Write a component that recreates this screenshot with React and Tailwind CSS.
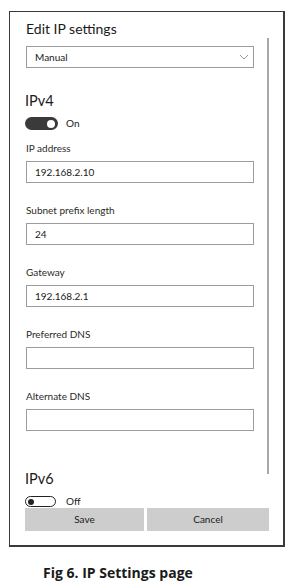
import React from 'react';

const Toggle = ({ on }) =>
  on ? (
    <div className="flex items-center h-[13px] w-[33px] rounded-full bg-[#3a3a3a] justify-end pr-[3px]">
      <div className="h-[8px] w-[8px] rounded-full bg-white" />
    </div>
  ) : (
    <div className="flex items-center h-[11px] w-[31px] rounded-full border-[1.5px] border-[#222] pl-[2px]">
      <div className="h-[6px] w-[6px] rounded-full bg-[#222]" />
    </div>
  );

const Field = ({ label, value }) => (
  <div className="mt-[20px]">
    <div className="text-[10px] leading-[14px] text-[#2a2a2a]">{label}</div>
    <div className="mt-[6px] h-[22px] w-[228px] border-[1.5px] border-[#9c9c9c] flex items-center pl-[8px] text-[10px] text-[#1a1a1a]">
      {value}
    </div>
  </div>
);

export default function App() {
  return (
    <div className="bg-white w-[289px] h-[587px] overflow-hidden" style={{ fontFamily: 'Lato, "Noto Sans", sans-serif' }}>
      <div className="relative ml-[9px] mt-[11px] w-[276px] h-[536px] border border-r-2 border-b-2 border-[#3a3a3a] pl-[16px]">
        {/* scrollbar */}
        <div className="absolute left-[257px] top-[26px] h-[436px] w-[2px] bg-[#a8a8a8]" />

        <div className="pt-[7px] text-[14px] leading-[20px] text-[#1a1a1a]">Edit IP settings</div>

        <div className="mt-[7px] h-[22px] w-[228px] border-[1.5px] border-[#9c9c9c] flex items-center justify-between pl-[8px] pr-[4px] text-[10px] text-[#1a1a1a]">
          <span>Manual</span>
          <svg width="10" height="6" viewBox="0 0 10 6" fill="none">
            <path d="M1 1l4 4 4-4" stroke="#9a9a9a" strokeWidth="1" />
          </svg>
        </div>

        <div className="mt-[23px] text-[14.5px] leading-[20px] text-[#1a1a1a] -ml-[1px]">IPv4</div>
        <div className="mt-[6px] flex items-center gap-[8px] -ml-[1px]">
          <Toggle on />
          <span className="text-[10px] leading-[13px] text-[#1a1a1a]">On</span>
        </div>

        <div className="-mt-[9px]">
          <Field label="IP address" value="192.168.2.10" />
        </div>
        <Field label="Subnet prefix length" value="24" />
        <Field label="Gateway" value="192.168.2.1" />
        <div className="mt-[1px]">
          <Field label="Preferred DNS" value="" />
        </div>
        <Field label="Alternate DNS" value="" />

        <div className="mt-[38px] text-[14.5px] leading-[20px] text-[#1a1a1a] -ml-[1px]">IPv6</div>
        <div className="mt-[7px] flex items-center gap-[10px] -ml-[1px]">
          <Toggle on={false} />
          <span className="text-[10px] leading-[11px] text-[#1a1a1a]">Off</span>
        </div>

        <div className="mt-[1px] flex gap-[3px] -ml-[1px]">
          <button className="h-[23px] w-[119px] bg-[#cdcdcd] text-[10px] text-[#1a1a1a]">Save</button>
          <button className="h-[23px] w-[122px] bg-[#cdcdcd] text-[10px] text-[#1a1a1a]">Cancel</button>
        </div>
      </div>

      <div className="mt-[16px] ml-[43px] text-[14px] leading-[19px] font-bold text-[#1a1a1a]" style={{ fontFamily: '"Open Sans", sans-serif' }}>
        Fig 6. IP Settings page
      </div>
    </div>
  );
}
